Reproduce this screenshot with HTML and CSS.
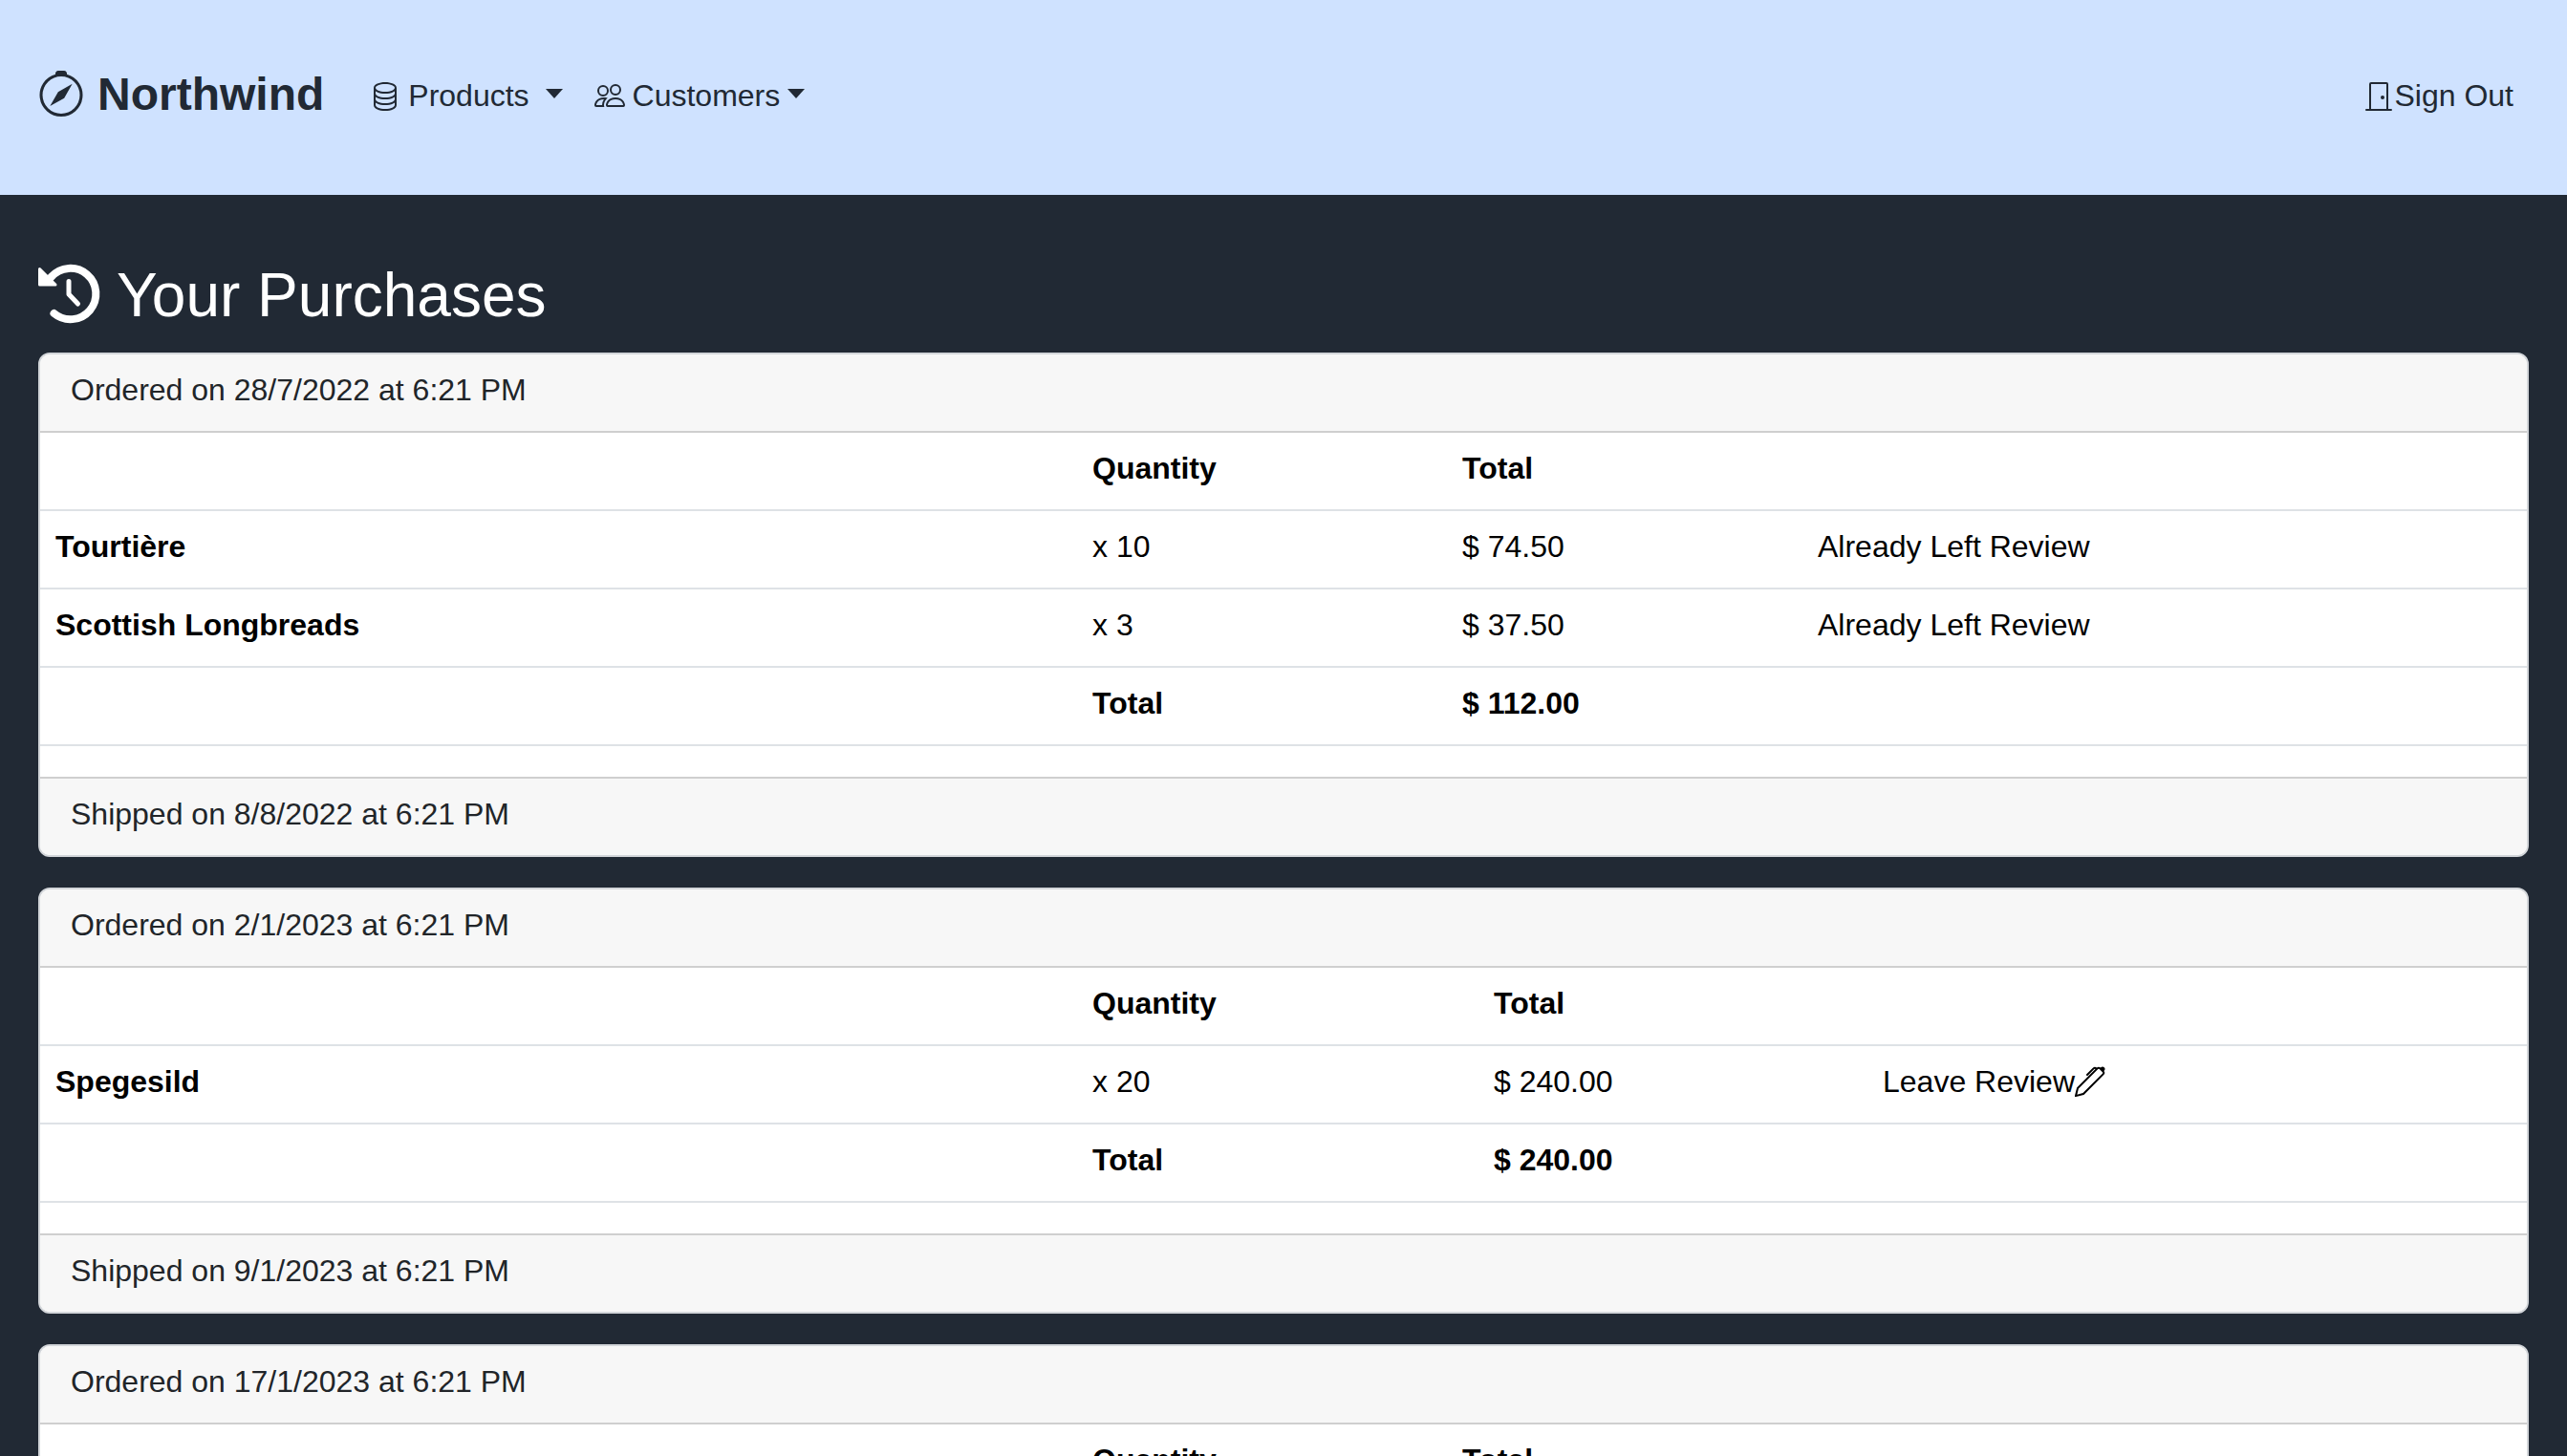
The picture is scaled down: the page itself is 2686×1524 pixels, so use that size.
FILE: index.html
```html
<!DOCTYPE html>
<html lang="en">
<head>
    <meta charset="UTF-8">
    <title>Your Purchases</title>
    <link rel="stylesheet" href="styles.css">
</head>
<body>
    <nav class="navbar">
        <a class="brand" href="#">
            <svg class="icon brand-icon" viewBox="0 0 16 16.02"><path d="M8 16.016a7.5 7.5 0 0 0 1.962-14.74A1 1 0 0 0 9 0H7a1 1 0 0 0-.962 1.276A7.5 7.5 0 0 0 8 16.016zm6.5-7.5a6.5 6.5 0 1 1-13 0 6.5 6.5 0 0 1 13 0z"/><path d="m6.94 7.44 4.95-2.83-2.83 4.95-4.949 2.83 2.828-4.95z"/></svg>
            Northwind
        </a>
        <a class="nav-link" href="#">
            <svg class="icon" viewBox="0 0 16 16"><path d="M4.318 2.687C5.234 2.271 6.536 2 8 2s2.766.27 3.682.687C12.644 3.125 13 3.627 13 4c0 .374-.356.875-1.318 1.313C10.766 5.729 9.464 6 8 6s-2.766-.27-3.682-.687C3.356 4.875 3 4.373 3 4c0-.374.356-.875 1.318-1.313ZM13 5.698V7c0 .374-.356.875-1.318 1.313C10.766 8.729 9.464 9 8 9s-2.766-.27-3.682-.687C3.356 7.875 3 7.373 3 7V5.698c.271.202.58.378.904.525C4.978 6.711 6.427 7 8 7s3.022-.289 4.096-.777A4.92 4.92 0 0 0 13 5.698ZM14 4c0-1.007-.875-1.755-1.904-2.223C11.022 1.289 9.573 1 8 1s-3.022.289-4.096.777C2.875 2.245 2 2.993 2 4v9c0 1.007.875 1.755 1.904 2.223C4.978 15.71 6.427 16 8 16s3.022-.289 4.096-.777C13.125 14.755 14 14.007 14 13V4Zm-1 4.698V10c0 .374-.356.875-1.318 1.313C10.766 11.729 9.464 12 8 12s-2.766-.27-3.682-.687C3.356 10.875 3 10.373 3 10V8.698c.271.202.58.378.904.525C4.978 9.71 6.427 10 8 10s3.022-.289 4.096-.777A4.92 4.92 0 0 0 13 8.698Zm0 3V13c0 .374-.356.875-1.318 1.313C10.766 14.729 9.464 15 8 15s-2.766-.27-3.682-.687C3.356 13.875 3 13.373 3 13v-1.302c.271.202.58.378.904.525C4.978 12.71 6.427 13 8 13s3.022-.289 4.096-.777c.324-.147.633-.323.904-.525Z"/></svg>
            <span class="products-label">Products</span><span class="caret"></span>
        </a>
        <a class="nav-link customers" href="#">
            <svg class="icon" viewBox="0 0 16 16"><path d="M15 14s1 0 1-1-1-4-5-4-5 3-5 4 1 1 1 1h8Zm-7.978-1A.261.261 0 0 1 7 12.996c.001-.264.167-1.03.76-1.72C8.312 10.629 9.282 10 11 10c1.717 0 2.687.63 3.24 1.276.593.69.758 1.457.76 1.72l-.008.002a.274.274 0 0 1-.014.002H7.022ZM11 7a2 2 0 1 0 0-4 2 2 0 0 0 0 4Zm3-2a3 3 0 1 1-6 0 3 3 0 0 1 6 0ZM6.936 9.28a5.88 5.88 0 0 0-1.23-.247A7.35 7.35 0 0 0 5 9c-4 0-5 3-5 4 0 .667.333 1 1 1h4.216A2.238 2.238 0 0 1 5 13c0-1.01.377-2.042 1.09-2.904.243-.294.526-.569.846-.816ZM4.92 10A5.493 5.493 0 0 0 4 13H1c0-.26.164-1.03.76-1.724.545-.636 1.492-1.256 3.16-1.275ZM1.5 5.5a3 3 0 1 1 6 0 3 3 0 0 1-6 0Zm3-2a2 2 0 1 0 0 4 2 2 0 0 0 0-4Z"/></svg>
            <span>Customers</span><span class="caret"></span>
        </a>
        <a class="nav-link sign-out" href="#">
            <svg class="icon" viewBox="0 0 16 16"><path d="M3 2a1 1 0 0 1 1-1h8a1 1 0 0 1 1 1v13h1.500a.5.5 0 0 1 0 1h-13a.5.5 0 0 1 0-1H3V2zm1 13h8V2H4v13z"/><path d="M9 9a1 1 0 1 0 2 0 1 1 0 0 0-2 0z"/></svg>
            <span>Sign Out</span>
        </a>
    </nav>

    <main class="content">
        <h1 class="page-title">
            <svg class="history-icon" viewBox="0 0 64 60"><path class="history-arc" d="M13.500 13A26.700 26.700 0 1 1 16.500 51"/><path class="history-arrow" d="M1.500 4.500V21H18Z"/><path class="history-hand" d="M32 17.500V31L41.500 41"/></svg>
            Your Purchases
        </h1>

        <section class="card">
            <div class="card-header">Ordered on 28/7/2022 at 6:21 PM</div>
            <table class="order-table">
                <colgroup><col class="col-name"><col class="col-qty"><col class="col-total"><col></colgroup>
                <tr class="bold"><td></td><td>Quantity</td><td>Total</td><td></td></tr>
                <tr><td class="bold">Tourtière</td><td>x 10</td><td>$ 74.50</td><td>Already Left Review</td></tr>
                <tr><td class="bold">Scottish Longbreads</td><td>x 3</td><td>$ 37.50</td><td>Already Left Review</td></tr>
                <tr class="bold"><td></td><td>Total</td><td>$ 112.00</td><td></td></tr>
            </table>
            <div class="card-gap"></div>
            <div class="card-footer">Shipped on 8/8/2022 at 6:21 PM</div>
        </section>

        <section class="card">
            <div class="card-header">Ordered on 2/1/2023 at 6:21 PM</div>
            <table class="order-table wide">
                <colgroup><col class="col-name"><col class="col-qty"><col class="col-total"><col></colgroup>
                <tr class="bold"><td></td><td>Quantity</td><td>Total</td><td></td></tr>
                <tr>
                    <td class="bold">Spegesild</td><td>x 20</td><td>$ 240.00</td>
                    <td><a class="review-link" href="#">Leave Review<svg class="icon" viewBox="0 0 16 16"><path d="m13.498.795.149-.149a1.207 1.207 0 1 1 1.707 1.708l-.149.148a1.500 1.500 0 0 1-.059 2.059L4.854 14.854a.5.5 0 0 1-.233.131l-4 1a.5.5 0 0 1-.606-.606l1-4a.5.5 0 0 1 .131-.232l9.642-9.642a.5.5 0 0 0-.642.056L6.854 4.854a.5.5 0 1 1-.708-.708L9.440.854A1.500 1.500 0 0 1 11.500.796a1.500 1.500 0 0 1 1.998-.001zm-.644.766a.5.5 0 0 0-.707 0L1.950 11.756l-.764 3.057 3.057-.764L14.440 3.854a.5.5 0 0 0 0-.708l-1.585-1.585z"/></svg></a></td>
                </tr>
                <tr class="bold"><td></td><td>Total</td><td>$ 240.00</td><td></td></tr>
            </table>
            <div class="card-gap"></div>
            <div class="card-footer">Shipped on 9/1/2023 at 6:21 PM</div>
        </section>

        <section class="card">
            <div class="card-header">Ordered on 17/1/2023 at 6:21 PM</div>
            <table class="order-table">
                <colgroup><col class="col-name"><col class="col-qty"><col class="col-total"><col></colgroup>
                <tr class="bold"><td></td><td>Quantity</td><td>Total</td><td></td></tr>
            </table>
        </section>
    </main>
</body>
</html>
```

FILE: styles.css
```css
html, body {
    height: 1524px;
    overflow: hidden;
}

body {
    margin: 0;
    background: #212934;
    color: #000;
    font-family: "Liberation Sans", Arial, sans-serif;
    font-size: 32px;
    line-height: 48px;
}

a {
    color: inherit;
    text-decoration: none;
}

.icon {
    width: 32px;
    height: 32px;
    fill: currentColor;
    flex: none;
}

/* navbar */
.navbar {
    display: flex;
    align-items: center;
    height: 204px;
    padding: 0 40px 4px;
    box-sizing: border-box;
    background: #cfe2ff;
    color: #212934;
}

.brand {
    display: flex;
    align-items: center;
    gap: 14px;
    margin: 0 48px 2px 0;
    font-size: 48px;
    font-weight: bold;
}

.brand-icon {
    width: 48px;
    height: 48px;
    margin-bottom: 2px;
}

.nav-link {
    display: flex;
    align-items: center;
    gap: 8px;
}

.products-label {
    margin-right: 9px;
}

.customers {
    margin-left: 33px;
}

.sign-out {
    margin-left: auto;
    gap: 0;
    padding-right: 16px;
}

.caret {
    border-top: 10px solid;
    border-left: 9px solid transparent;
    border-right: 9px solid transparent;
    margin-bottom: 4px;
}

/* page */
.content {
    padding: 58px 40px 0;
}

.page-title {
    display: flex;
    align-items: center;
    gap: 18px;
    margin: 0 0 13px;
    height: 94px;
    color: #fff;
    font-size: 64px;
    font-weight: normal;
    line-height: 94px;
}

.history-icon {
    width: 64px;
    height: 60px;
    margin-bottom: 4px;
    flex: none;
    overflow: visible;
}

.history-arc,
.history-hand {
    fill: none;
    stroke: #fff;
    stroke-linecap: round;
    stroke-linejoin: round;
}

.history-arc {
    stroke-width: 8;
}

.history-hand {
    stroke-width: 5;
}

.history-arrow {
    fill: #fff;
    stroke: #fff;
    stroke-width: 3;
    stroke-linejoin: round;
}

/* order cards */
.card {
    margin-bottom: 32px;
    border: 2px solid #d3d6da;
    border-radius: 12px;
    background: #fff;
    overflow: hidden;
}

.card-header,
.card-footer {
    padding: 13px 32px 19px;
    background: #f7f7f7;
    color: #212529;
}

.card-header {
    border-bottom: 2px solid #cfcfcf;
}

.card-footer {
    border-top: 2px solid #cfcfcf;
}

.card-gap {
    height: 32px;
}

.order-table {
    width: 100%;
    table-layout: fixed;
    border-collapse: collapse;
}

.order-table td {
    padding: 13px 16px 19px;
    border-bottom: 2px solid #dee2e6;
}

.col-name {
    width: 1085px;
}

.col-qty {
    width: 387px;
}

.col-total {
    width: 372px;
}

.wide .col-qty {
    width: 420px;
}

.wide .col-total {
    width: 407px;
}

.bold {
    font-weight: bold;
}

.review-link {
    display: inline-flex;
    align-items: center;
}
```
